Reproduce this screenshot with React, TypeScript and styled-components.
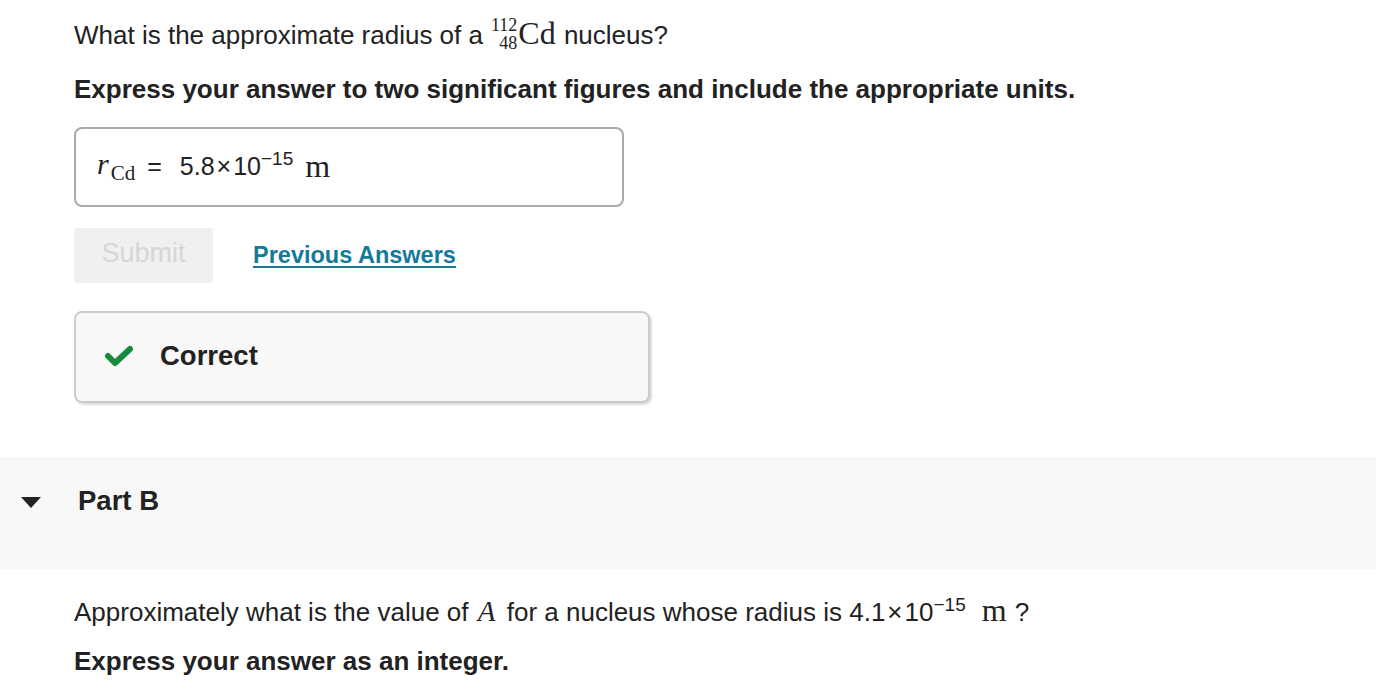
import React from "react";
import styled, { createGlobalStyle } from "styled-components";

const GlobalStyle = createGlobalStyle`
  body {
    margin: 0;
    background: #ffffff;
    font-family: "Liberation Sans", Arial, sans-serif;
    color: #222222;
  }
`;

const Page = styled.div`
  width: 1376px;
  height: 696px;
  overflow: hidden;
`;

const Section = styled.div`
  padding: 13px 0 0 74px;
`;

const Question = styled.p`
  margin: 0;
  font-size: 26px;
  line-height: 40px;
  height: 40px;
  white-space: nowrap;
`;

const Instruction = styled.p<{ $gap: number }>`
  margin: ${(p) => p.$gap}px 0 0;
  font-size: 26px;
  font-weight: bold;
  line-height: 30px;
`;

const Serif = styled.span`
  font-family: "Liberation Serif", "Times New Roman", serif;
  font-size: 32px;
  margin-right: 1px;
`;

const Italic = styled.span`
  font-family: "Liberation Serif", "Times New Roman", serif;
  font-size: 29px;
  font-style: italic;
  margin: 0 4px 0 2px;
`;

const Nuclide = styled.span`
  display: inline-flex;
  flex-direction: column;
  align-items: flex-end;
  vertical-align: middle;
  font-family: "Liberation Serif", "Times New Roman", serif;
  font-size: 18px;
  line-height: 18px;
  margin: 0 1px 0 8px;
  position: relative;
  top: -3px;
`;

const AnswerBox = styled.div`
  margin-top: 23px;
  width: 550px;
  height: 80px;
  border: 2px solid #aaaaaa;
  border-radius: 8px;
  display: flex;
  align-items: center;
  padding: 0 0 2px 21px;
  box-sizing: border-box;
  font-size: 25px;
`;

const Variable = styled.span`
  font-family: "Liberation Serif", "Times New Roman", serif;
  font-style: italic;
  font-size: 30px;
`;

const Sub = styled.sub`
  font-family: "Liberation Serif", "Times New Roman", serif;
  font-style: normal;
  font-size: 21px;
  vertical-align: -6px;
  margin-left: 2px;
`;

const Equals = styled.span`
  margin: 0 18px 0 12px;
`;

const Times = styled.span`
  margin: 0 2px;
`;

const Sup = styled.sup`
  font-size: 19px;
  vertical-align: 10px;
  line-height: 0;
`;

const Unit = styled.span<{ $gap: number }>`
  font-family: "Liberation Serif", "Times New Roman", serif;
  font-size: 32px;
  letter-spacing: 1px;
  margin-left: ${(p) => p.$gap}px;
`;

const ActionRow = styled.div`
  display: flex;
  align-items: center;
  margin-top: 21px;
  gap: 40px;
`;

const SubmitButton = styled.button`
  width: 139px;
  height: 55px;
  padding: 0 0 4px;
  border: none;
  border-radius: 4px;
  background: #f0f0f0;
  color: #d6d6d6;
  font-family: "Liberation Sans", Arial, sans-serif;
  font-size: 27px;
`;

const Link = styled.a`
  color: #157a98;
  font-weight: bold;
  font-size: 23.5px;
  text-decoration: underline;
  text-decoration-thickness: 2px;
  text-underline-offset: 3px;
`;

const Feedback = styled.div`
  margin-top: 28px;
  width: 576px;
  height: 92px;
  background: #f8f8f8;
  border: 2px solid #cccccc;
  border-radius: 8px;
  box-shadow: 2px 2px 2px rgba(0, 0, 0, 0.14);
  display: flex;
  align-items: center;
  padding: 0 0 2px 28px;
  gap: 26px;
  box-sizing: border-box;
`;

const FeedbackText = styled.span`
  font-size: 27.5px;
  font-weight: bold;
  color: #222222;
`;

const PartHeader = styled.div`
  margin-top: 54px;
  height: 112px;
  background: #f8f8f8;
  display: flex;
  align-items: center;
  padding: 0 0 24px 21px;
  gap: 37px;
  box-sizing: border-box;
`;

const Caret = styled.span`
  width: 0;
  height: 0;
  border-left: 10px solid transparent;
  border-right: 10px solid transparent;
  border-top: 11px solid #222222;
  margin-top: 2px;
`;

const PartTitle = styled.span`
  font-size: 27.5px;
  font-weight: bold;
  color: #222222;
`;

const PartSection = styled.div`
  padding: 21px 0 0 74px;
`;

const Check = () => (
  <svg width="30" height="24" viewBox="0 0 30 24">
    <polyline
      points="4,12 11,19 26,5"
      fill="none"
      stroke="#178a3c"
      strokeWidth="6"
      strokeLinecap="round"
      strokeLinejoin="round"
    />
  </svg>
);

export default function App() {
  return (
    <Page>
      <GlobalStyle />
      <Section>
        <Question>
          What is the approximate radius of a
          <Nuclide>
            <span>112</span>
            <span>48</span>
          </Nuclide>
          <Serif>Cd</Serif> nucleus?
        </Question>
        <Instruction $gap={21}>
          Express your answer to two significant figures and include the appropriate units.
        </Instruction>
        <AnswerBox>
          <Variable>
            r<Sub>Cd</Sub>
          </Variable>
          <Equals>=</Equals>
          <span>
            5.8<Times>×</Times>10<Sup>−15</Sup>
          </span>
          <Unit $gap={12}>m</Unit>
        </AnswerBox>
        <ActionRow>
          <SubmitButton disabled>Submit</SubmitButton>
          <Link href="#">Previous Answers</Link>
        </ActionRow>
        <Feedback>
          <Check />
          <FeedbackText>Correct</FeedbackText>
        </Feedback>
      </Section>
      <PartHeader>
        <Caret />
        <PartTitle>Part B</PartTitle>
      </PartHeader>
      <PartSection>
        <Question>
          Approximately what is the value of <Italic>A</Italic> for a nucleus whose radius is 4.1<Times>×</Times>10
          <Sup>−15</Sup>
          <Unit $gap={16}>m</Unit> ?
        </Question>
        <Instruction $gap={16}>Express your answer as an integer.</Instruction>
      </PartSection>
    </Page>
  );
}
